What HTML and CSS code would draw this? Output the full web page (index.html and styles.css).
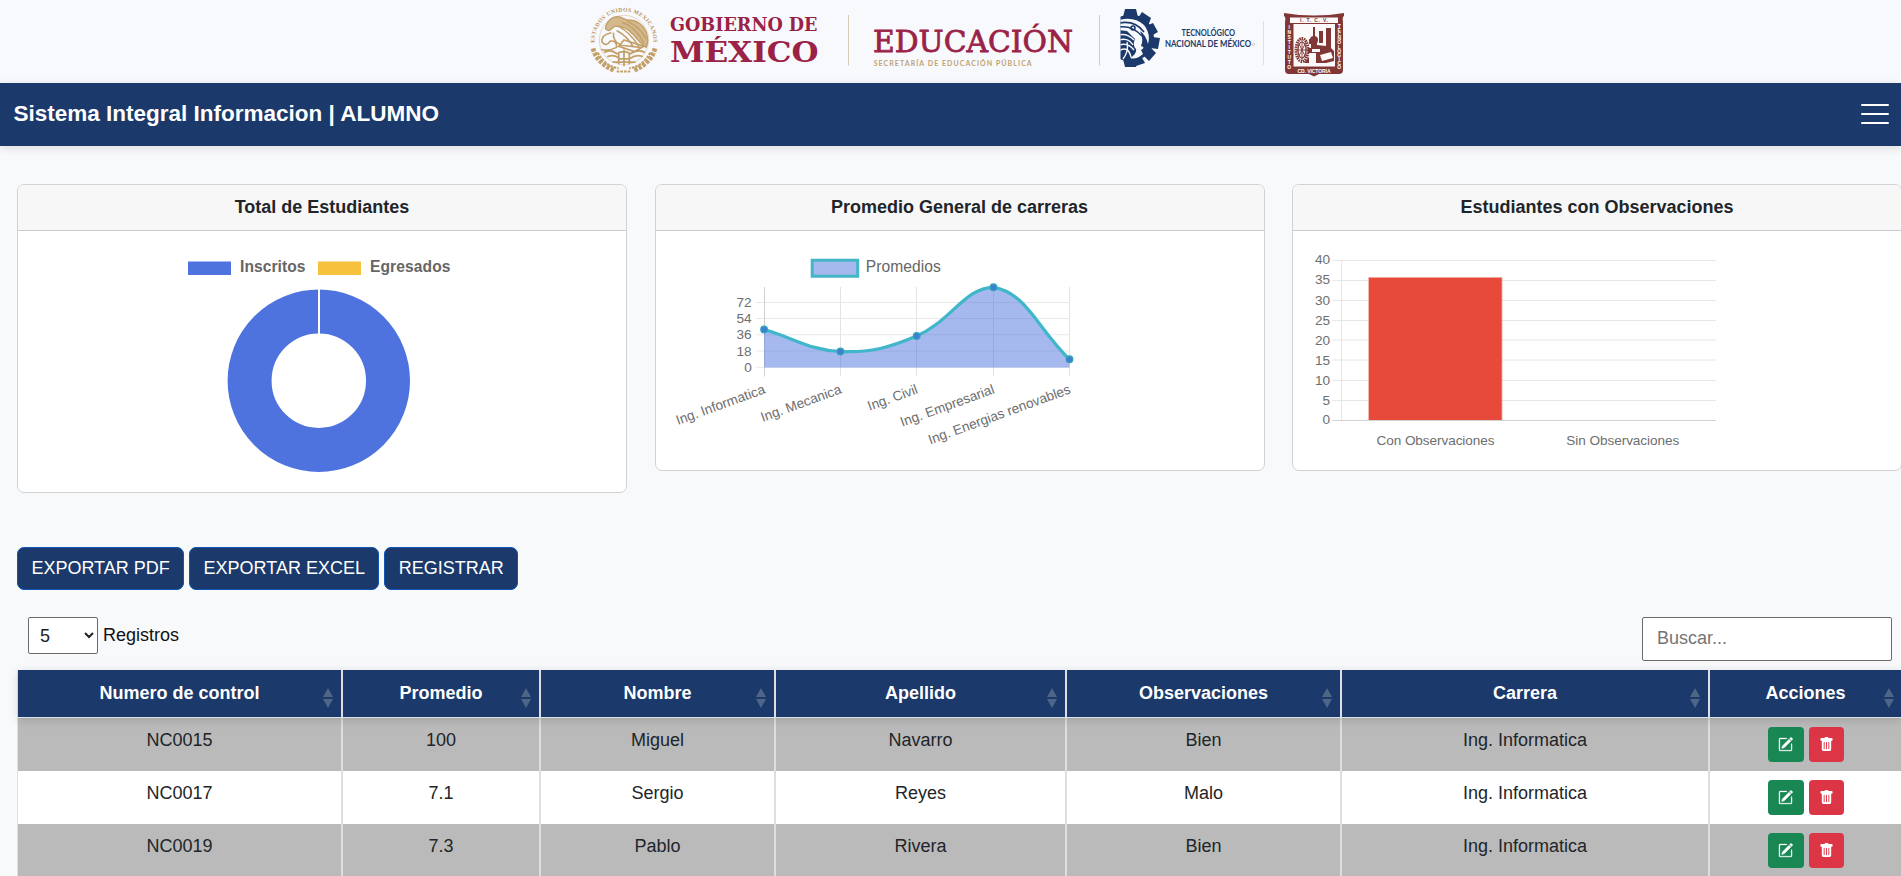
FILE: index.html
```html
<!DOCTYPE html>
<html lang="es">
<head>
<meta charset="utf-8">
<title>Sistema Integral Informacion</title>
<link rel="stylesheet" href="styles.css">
</head>
<body>
<svg class="defs" width="0" height="0" aria-hidden="true">
  <symbol id="pencil" viewBox="0 0 16 16"><path d="M15.502 1.94a.5.5 0 0 1 0 .706L14.459 3.69l-2-2L13.502.646a.5.5 0 0 1 .707 0l1.293 1.293zm-1.75 2.456-2-2L4.939 9.21a.5.5 0 0 0-.121.196l-.805 2.414a.25.25 0 0 0 .316.316l2.414-.805a.5.5 0 0 0 .196-.12l6.813-6.814z" stroke="#fff" stroke-width=".5"/><path d="M1 13.5A1.5 1.5 0 0 0 2.5 15h11a1.5 1.5 0 0 0 1.5-1.5v-6a.5.5 0 0 0-1 0v6a.5.5 0 0 1-.5.5h-11a.5.5 0 0 1-.5-.5v-11a.5.5 0 0 1 .5-.5H9a.5.5 0 0 0 0-1H2.500A1.500 1.500 0 0 0 1 2.500z" stroke="#fff" stroke-width=".3"/></symbol>
  <symbol id="trash" viewBox="0 0 16 16"><path d="M2.500 1a1 1 0 0 0-1 1v1a1 1 0 0 0 1 1H3v9a2 2 0 0 0 2 2h6a2 2 0 0 0 2-2V4h.5a1 1 0 0 0 1-1V2a1 1 0 0 0-1-1H10a1 1 0 0 0-1-1H7a1 1 0 0 0-1 1zm3 4a.5.5 0 0 1 .5.5v7a.5.5 0 0 1-1 0v-7a.5.5 0 0 1 .5-.5M8 5a.5.5 0 0 1 .5.5v7a.5.5 0 0 1-1 0v-7A.5.5 0 0 1 8 5m3 .5v7a.5.5 0 0 1-1 0v-7a.5.5 0 0 1 1 0"/></symbol>
  <symbol id="sort" viewBox="0 0 10 20"><path d="M5 0 10 9H0zM0 11h10L5 20z"/></symbol>
</svg>

<header class="brand">
  <svg class="brand-logos" width="780" height="83" viewBox="580 0 780 83">
    <!-- National seal -->
    <defs><path id="arc" d="M596.800 47.500A28 28 0 1 1 651.200 47.500"/></defs>
    <g fill="none" stroke="#c3a06a" transform="translate(624 40)scale(1.05)translate(-624 -40)">
      <text class="seal-text" fill="#b9945c" stroke="none"><textPath href="#arc" startOffset="5" textLength="91">ESTADOS UNIDOS MEXICANOS</textPath></text>
      <path d="M594.500 48Q598 62 615 69M653.500 48Q650 62 633 69" stroke-width="4.500" stroke-dasharray="3.200 1.200"/>
      <path d="M599 52Q606 65 619 67M649 52Q642 65 629 67M617 70H631" stroke-width="2" stroke-dasharray="2.500 1"/>
      <circle cx="624" cy="40" r="23.500" stroke-width=".7" opacity=".5"/>
      <path d="M607 26Q611 17 620 18L627 21Q639 20 645 32Q648 42 645 47Q638 42 632 34Q625 26 615 27L610 31Q605 31 607 26Z" fill="#d4b98c" stroke-width="1.300"/>
      <path d="M622 23Q635 27 643 43M619 27Q630 33 638 46M627 22Q640 28 645 39M617 31Q628 37 633 47M614 33Q613 41 621 45L640 47M612 33Q602 35 603 42Q607 47 611 41Q617 40 617 47Q609 51 602 49" stroke-width="1.500"/>
      <path d="M624 40L643 46 634 51 619 46ZM605 52Q611 48 617 53Q624 49 630 53Q638 48 644 52M608 56Q615 53 620 58H629Q636 53 642 56M613 61H635M619 53V63M629 53V63M624 49V65" stroke-width="1.700"/>
    </g>
    <g class="gob">
      <text x="670" y="31" font-size="18" textLength="147.500" lengthAdjust="spacingAndGlyphs">GOBIERNO DE</text>
      <text x="670" y="62" font-size="28" textLength="148.500" lengthAdjust="spacingAndGlyphs">MÉXICO</text>
    </g>
    <path class="brand-rule" d="M848.500 15V65.500M1099.500 15V65.500"/>
    <text class="edu" x="873" y="52" textLength="200" lengthAdjust="spacingAndGlyphs">EDUCACIÓN</text>
    <text class="sep" x="873.700" y="66" textLength="158">SECRETARÍA DE EDUCACIÓN PÚBLICA</text>
    <!-- TecNM gear -->
    <clipPath id="gearclip"><path d="M1120.500 0H1170V80H1120.500Z"/></clipPath>
    <g clip-path="url(#gearclip)">
      <circle cx="1130.500" cy="38" r="23.500" fill="#1b396a"/>
      <path d="M1125 9H1136L1138 17H1123ZM1125 67H1136L1138 59H1123Z" fill="#1b396a"/>
      <g fill="#1b396a">
        <path d="M1142 12 1151 18 1148 26 1138 18ZM1153 23 1158 32 1151 36 1146 26ZM1152 37 1160 38 1158 49 1150 48ZM1149 46 1156 53 1149 61 1142 54ZM1141 56 1145 63 1136 66 1133 59Z"/>
      </g>
      <path d="M1119 20Q1134 16 1144 25Q1151 34 1148 44Q1146 35 1140 31Q1144 39 1141 46Q1146 47 1141 50L1143 54Q1136 60 1130 58Q1137 54 1136 49Q1132 45 1135 39L1127 31 1119 30Z" fill="#f8f9fc"/>
      <g fill="none" stroke="#1b396a" stroke-width="1.600"><path d="M1119 23Q1135 20 1144 32M1119 27Q1132 25 1142 36"/><circle cx="1133" cy="28" r="2"/></g>
      <g fill="none" stroke="#f8f9fc" stroke-width="1.400"><path d="M1119 35Q1127 33 1134 40M1119 40Q1128 37 1133 45M1119 45Q1128 42 1134 50M1119 51Q1128 45 1131 57M1123 59Q1129 51 1127 42"/></g>
    </g>
    <g class="tec">
      <text x="1181.500" y="36" textLength="53.500" lengthAdjust="spacingAndGlyphs">TECNOLÓGICO</text>
      <text x="1165" y="47" textLength="86" lengthAdjust="spacingAndGlyphs">NACIONAL DE MÉXICO</text>
    </g>
    <circle cx="1253.500" cy="44.500" r="1.200" fill="none" stroke="#a9b2c1" stroke-width=".6"/>
    <path d="M1263.500 21V65" stroke="#e0dfe0"/>
    <!-- Campus shield -->
    <path d="M1284 13Q1314 18 1344 13V16Q1342 17 1343 22V70Q1343 74 1339 74H1319L1314 76.500 1309 74H1289Q1285 74 1285 70V22Q1286 17 1284 16Z" fill="#823737"/>
    <path d="M1290 17.500H1338V23H1290ZM1293.500 24H1335V66.500H1293.500Z" fill="#fbf9f9"/>
    <g class="shield-text">
      <text x="1314" y="22.300" fill="#823737" textLength="28">I. T. C. V.</text>
      <text x="1314" y="72.500" textLength="33">CD. VICTORIA</text>
      <text x="1289.200 1289.200 1289.200 1289.200 1289.200 1289.200 1289.200 1289.200 1289.200" y="28.500 33.500 38.500 43.500 48.500 53.500 58.500 63.500 68.500">INSTITUTO</text>
      <text x="1339.200 1339.200 1339.200 1339.200 1339.200 1339.200 1339.200 1339.200 1339.200 1339.200 1339.200" y="28 32.100 36.200 40.300 44.400 48.500 52.600 56.700 60.800 64.900 69">TECNOLOGICO</text>
    </g>
    <g fill="none" stroke="#823737">
      <ellipse cx="1302" cy="50" rx="6" ry="11.500" stroke-width="3" stroke-dasharray="1.500 .8"/>
      <ellipse cx="1302" cy="50" rx="4" ry="8" stroke-width="1.200"/>
      <path d="M1298 42 1306 58M1306 42 1298 58M1296 50H1308M1302 39V61" stroke-width=".9"/>
    </g>
    <path d="M1309 39H1317V45L1326 46V28H1331V48L1334 51V61L1326 63H1309V57L1304 63H1316V53H1308V48H1311V44H1309ZM1313 27H1315V38H1313ZM1319 31H1323V43H1319Z" fill="#823737"/>
    <circle cx="1314" cy="40" r="4" fill="#823737"/>
    <path d="M1312 49H1320V52H1312ZM1320 55 1331 52 1333 58 1322 61Z" fill="#fbf9f9"/>
  </svg>
</header>

<nav class="navbar">
  <span class="navbar-title">Sistema Integral Informacion | ALUMNO</span>
  <button class="burger" aria-label="Menu"><i></i><i></i><i></i></button>
</nav>

<main class="page">
  <section class="cards">
    <article class="card">
      <h2 class="card-title">Total de Estudiantes</h2>
      <svg class="chart" width="608" height="261" viewBox="18 231 608 261">
        <path d="M188 261.500H231V275H188Z" fill="#4e73df"/>
        <path d="M318 261.500H361V275H318Z" fill="#f6c23e"/>
        <g class="legend bold"><text x="240" y="272" textLength="65.500">Inscritos</text><text x="370" y="272" textLength="80.500">Egresados</text></g>
        <circle cx="318.800" cy="380.700" r="69.200" fill="none" stroke="#4e73df" stroke-width="44"/>
        <path d="M319 288V334" stroke="#fff" stroke-width="2"/>
      </svg>
    </article>
    <article class="card">
      <h2 class="card-title">Promedio General de carreras</h2>
      <svg class="chart" width="608" height="239" viewBox="656 231 608 239">
        <path d="M812.200 260.200H857.700V276.200H812.200Z" fill="#a6b9ef" stroke="#45b5c8" stroke-width="3"/>
        <text class="legend" x="865.700" y="272" textLength="75">Promedios</text>
        <path d="M755.500 302.500H1069.500M755.500 318.500H1069.500M755.500 334.700H1069.500M755.500 351H1069.500M755.500 367.300H1069.500" stroke="#e9e9e9"/>
        <path d="M840.500 287V376.500M916.500 287V376.500M993.500 287V376.500M1069.500 287V376.500" stroke="#e3e3e3"/>
        <path d="M764.500 287V376.500" stroke="#cfcfcf"/>
        <path d="M764.100 329.500C794.600 338.300 809.600 350.200 840.400 351.500C870.600 352.800 888.400 347.900 916.700 336C949.700 322.200 965.100 287.300 993.500 287.300C1026.200 292.300 1039 330.500 1069.500 359.300V367.500H764.100Z" fill="#4e73df" fill-opacity=".5"/>
        <path d="M764.100 329.500C794.600 338.300 809.600 350.200 840.400 351.500C870.600 352.800 888.400 347.900 916.700 336C949.700 322.200 965.100 287.300 993.500 287.300C1026.200 292.300 1039 330.500 1069.500 359.300" fill="none" stroke="#3fb6ca" stroke-width="3.200"/>
        <g fill="#3d7fd0" stroke="#36a3bd" stroke-width="1.300"><circle cx="764.100" cy="329.500" r="3.300"/><circle cx="840.400" cy="351.500" r="3.300"/><circle cx="916.700" cy="336" r="3.300"/><circle cx="993.500" cy="287.300" r="3.300"/><circle cx="1069.500" cy="359.300" r="3.300"/></g>
        <g class="tick end"><text x="751.700" y="306.500">72</text><text x="751.700" y="322.500">54</text><text x="751.700" y="338.700">36</text><text x="751.700" y="355.500">18</text><text x="751.700" y="371.800">0</text></g>
        <g class="tick end">
          <text transform="translate(766 393)rotate(-20)">Ing. Informatica</text>
          <text transform="translate(842.300 393)rotate(-20)">Ing. Mecanica</text>
          <text transform="translate(918.600 393)rotate(-20)">Ing. Civil</text>
          <text transform="translate(995.300 393)rotate(-20)">Ing. Empresarial</text>
          <text transform="translate(1071.500 393)rotate(-20)">Ing. Energias renovables</text>
        </g>
      </svg>
    </article>
    <article class="card">
      <h2 class="card-title">Estudiantes con Observaciones</h2>
      <svg class="chart" width="608" height="239" viewBox="1293 231 608 239">
        <path d="M1332.500 260.500H1716M1332.500 280.500H1716M1332.500 300.500H1716M1332.500 320.500H1716M1332.500 340H1716M1332.500 360H1716M1332.500 380.500H1716M1332.500 400.500H1716M1341.500 260V420" stroke="#e6e6e6"/>
        <path d="M1332.500 420.500H1716" stroke="#d2d2d2"/>
        <path d="M1369 277.500H1502V420H1369Z" fill="#e74a3b"/><path d="M1368.500 420V277.500H1502V420" fill="none" stroke="#efa49b" stroke-width=".8"/>
        <g class="tick end"><text x="1330" y="264.300">40</text><text x="1330" y="284.400">35</text><text x="1330" y="304.500">30</text><text x="1330" y="324.500">25</text><text x="1330" y="344.500">20</text><text x="1330" y="364.700">15</text><text x="1330" y="384.700">10</text><text x="1330" y="404.500">5</text><text x="1330" y="424.300">0</text></g>
        <g class="tick"><text x="1376.500" y="445" textLength="118">Con Observaciones</text><text x="1566.300" y="445" textLength="113">Sin Observaciones</text></g>
      </svg>
    </article>
  </section>

  <div class="actions">
    <button class="btn-main">EXPORTAR PDF</button>
    <button class="btn-main">EXPORTAR EXCEL</button>
    <button class="btn-main">REGISTRAR</button>
  </div>

  <div class="controls">
    <label class="length"><select><option>5</option></select> Registros</label>
    <input class="search" type="search" placeholder="Buscar...">
  </div>

  <table class="grid">
    <colgroup><col class="c1"><col class="c2"><col class="c3"><col class="c4"><col class="c5"><col class="c6"><col class="c7"></colgroup>
    <thead><tr>
      <th>Numero de control<svg class="sort"><use href="#sort"/></svg></th>
      <th>Promedio<svg class="sort"><use href="#sort"/></svg></th>
      <th>Nombre<svg class="sort"><use href="#sort"/></svg></th>
      <th>Apellido<svg class="sort"><use href="#sort"/></svg></th>
      <th>Observaciones<svg class="sort"><use href="#sort"/></svg></th>
      <th>Carrera<svg class="sort"><use href="#sort"/></svg></th>
      <th>Acciones<svg class="sort"><use href="#sort"/></svg></th>
    </tr></thead>
    <tbody>
      <tr><td>NC0015</td><td>100</td><td>Miguel</td><td>Navarro</td><td>Bien</td><td>Ing. Informatica</td><td><div class="row-actions"><button class="edit"><svg><use href="#pencil"/></svg></button><button class="del"><svg><use href="#trash"/></svg></button></div></td></tr>
      <tr><td>NC0017</td><td>7.1</td><td>Sergio</td><td>Reyes</td><td>Malo</td><td>Ing. Informatica</td><td><div class="row-actions"><button class="edit"><svg><use href="#pencil"/></svg></button><button class="del"><svg><use href="#trash"/></svg></button></div></td></tr>
      <tr><td>NC0019</td><td>7.3</td><td>Pablo</td><td>Rivera</td><td>Bien</td><td>Ing. Informatica</td><td><div class="row-actions"><button class="edit"><svg><use href="#pencil"/></svg></button><button class="del"><svg><use href="#trash"/></svg></button></div></td></tr>
    </tbody>
  </table>
</main>
</body>
</html>
```

FILE: styles.css
```css
* { box-sizing: border-box; }
html, body { height: 100%; overflow: hidden; }
body {
  margin: 0;
  background: #f8f9fb;
  color: #212529;
  font: 18px/26.4px "Liberation Sans", Arial, sans-serif;
}
button, input, select { font: inherit; }
.defs { position: absolute; }

.brand { height: 83px; padding-left: 580px; background: #f8f9fc; }
.brand-logos { display: block; }
.seal-text { font: bold 5.4px "Liberation Serif", serif; }
.gob { fill: #9a2247; font-family: "DejaVu Serif", serif; font-weight: bold; }
.edu { fill: #9a2247; stroke: #9a2247; stroke-width: .8; font: 30px "DejaVu Serif", serif; }
.sep { fill: #c0a273; font: bold 7px Lato, sans-serif; }
.brand-rule { stroke: #d9cbb7; stroke-width: 1; }
.tec { fill: #1b396a; font: bold 9px Lato, sans-serif; }
.shield-text { fill: #fff; font: bold 5px "Liberation Sans", sans-serif; text-anchor: middle; }

.navbar {
  display: flex;
  align-items: center;
  justify-content: space-between;
  height: 63px;
  padding: 0 12px 0 13.5px;
  background: #1b396a;
  box-shadow: 0 2px 9px rgba(0, 0, 0, .12);
}
.navbar-title { color: #fff; font-size: 22.5px; font-weight: bold; padding-bottom: 1px; }
.burger { display: flex; flex-direction: column; gap: 7px; padding: 0 0 2px; border: 0; background: none; }
.burger i { width: 28px; height: 2px; border-radius: 1px; background: #fff; }

.page { width: 1902px; padding: 38px 0 0 17px; }
.cards { display: grid; grid-template-columns: repeat(3, 610px); gap: 27.5px; align-items: start; height: 363px; }
.card { overflow: hidden; border: 1px solid #d0d2d4; border-radius: 7px; background: #fff; }
.card-title {
  margin: 0;
  height: 46px;
  padding-top: 9px;
  border-bottom: 1px solid #cbcccd;
  background: #f7f7f7;
  font-size: 18px;
  line-height: 26.4px;
  text-align: center;
}
.chart { display: block; }
.legend { fill: #666; font-size: 15.6px; }
.bold { font-weight: bold; }
.tick { fill: #6e6e6e; font-size: 13.6px; }
.end { text-anchor: end; }

.actions { display: flex; gap: 5px; }
.btn-main {
  height: 43px;
  padding: 0 13.4px;
  border: 1px solid #0d55b8;
  border-radius: 7px;
  background: #1b396a;
  color: #fff;
}

.controls { display: flex; justify-content: space-between; align-items: flex-start; height: 80px; padding: 27px 10px 0 11px; }
.length { display: flex; align-items: center; gap: 5px; color: #111; }
.length select { width: 70px; height: 37px; padding: 0 7px; border: 1px solid #6b6b6b; border-radius: 2px; background: #fff; color: #222; }
.search { width: 250px; height: 44px; padding: 0 14px 2px; border: 1px solid #6b6b6b; border-radius: 2px; background: #fff; }
.search::placeholder { color: #757575; }

.grid { width: 1885px; table-layout: fixed; border-spacing: 0; border-left: 1px solid #dee2e6; text-align: center; }
.c1 { width: 325px; } .c2 { width: 198px; } .c3 { width: 235px; } .c4 { width: 291px; }
.c5 { width: 275px; } .c6 { width: 368px; } .c7 { width: 192px; }
.grid thead { box-shadow: 0 2px 9px rgba(0, 0, 0, .14); position: relative; }
.grid th, .grid td { padding: 0; border-right: 2px solid #dcdee2; vertical-align: top; }
.grid th:last-child, .grid td:last-child { border-right: 0; padding-right: 1px; }
.grid th { position: relative; height: 48px; padding-top: 10px; border-bottom: 1px solid #dee2e6; background: #1b396a; color: #fff; }
.grid td { height: 53px; padding-top: 9px; background: #fff; }
.grid tbody tr:nth-child(odd) td { background: #bababa; }
.sort { position: absolute; right: 8px; top: 18px; width: 10px; height: 20px; fill: #4e6588; }
.row-actions { display: flex; justify-content: center; gap: 5px; }
.row-actions button { display: flex; width: 36px; height: 35px; padding: 9.5px 0 0 10.5px; border: 0; border-radius: 4px; color: #fff; }
.row-actions .edit { background: #198754; }
.row-actions .del { width: 35px; padding-left: 10px; background: #dc3545; }
.row-actions svg { width: 15px; height: 15px; fill: #fff; }
```
